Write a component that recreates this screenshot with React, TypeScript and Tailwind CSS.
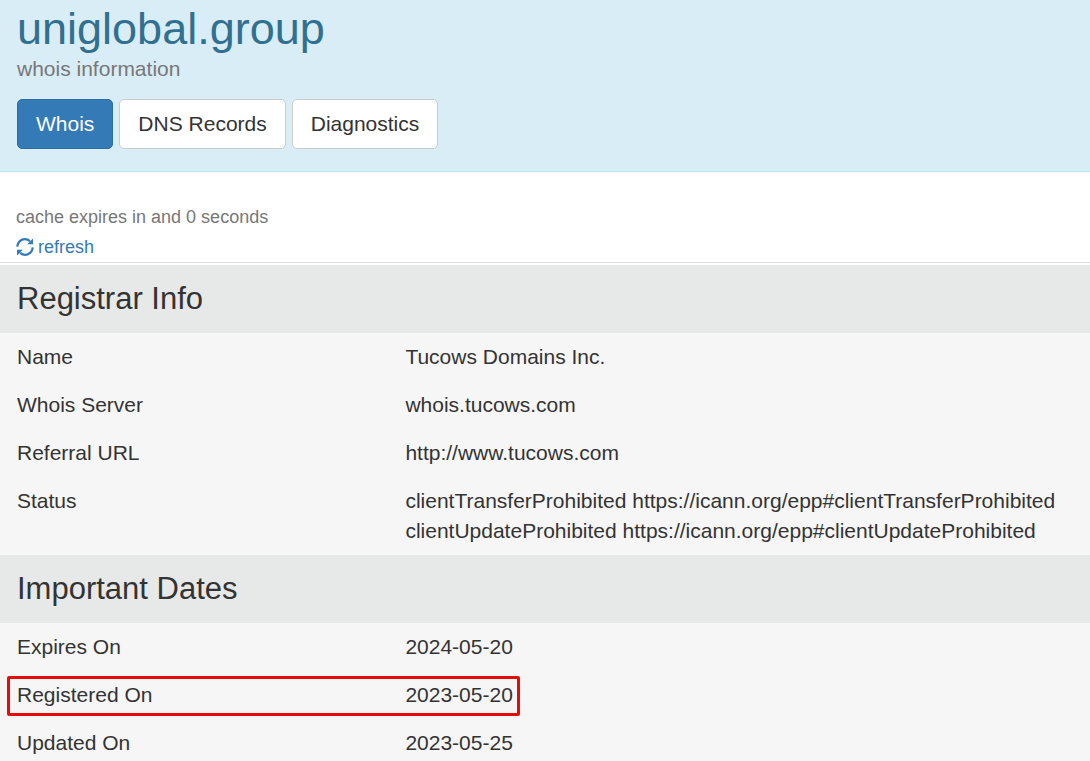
type Row = { label: string; values: string[]; marked?: boolean };

const registrar: Row[] = [
  { label: 'Name', values: ['Tucows Domains Inc.'] },
  { label: 'Whois Server', values: ['whois.tucows.com'] },
  { label: 'Referral URL', values: ['http://www.tucows.com'] },
  {
    label: 'Status',
    values: [
      'clientTransferProhibited https://icann.org/epp#clientTransferProhibited',
      'clientUpdateProhibited https://icann.org/epp#clientUpdateProhibited',
    ],
  },
];

const dates: Row[] = [
  { label: 'Expires On', values: ['2024-05-20'] },
  { label: 'Registered On', values: ['2023-05-20'], marked: true },
  { label: 'Updated On', values: ['2023-05-25'] },
];

export default function App() {
  return (
    <div className="bg-white font-['Liberation_Sans',Arial,sans-serif] text-[21px] leading-[30px] text-[#333]">
      <header className="border-b border-[#bce8f1] bg-[#d9edf7] px-[17px] pb-[22px]">
        <h1 className="text-[45px] leading-[58px] text-[#31708f]">uniglobal.group</h1>
        <p className="leading-[22px] text-[#777]">whois information</p>
        <nav className="mt-[19px] flex gap-[6px]">
          <Tab label="Whois" active />
          <Tab label="DNS Records" />
          <Tab label="Diagnostics" />
        </nav>
      </header>

      <div className="border-b border-[#ddd] px-4 pt-[30px] text-[18px]">
        <p className="text-[#777]">cache expires in and 0 seconds</p>
        <a href="#" className="flex w-fit items-center gap-1 text-[#337ab7]">
          <RefreshIcon />
          refresh
        </a>
      </div>

      <main className="pt-[2px]">
        <Section title="Registrar Info" rows={registrar} />
        <Section title="Important Dates" rows={dates} />
      </main>
    </div>
  );
}

function Tab({ label, active = false }: { label: string; active?: boolean }) {
  return (
    <button
      type="button"
      className={`h-[50px] rounded-[5px] border px-[18px] ${
        active ? 'border-[#2e6da4] bg-[#337ab7] text-white' : 'border-[#ccc] bg-white'
      }`}
    >
      {label}
    </button>
  );
}

function RefreshIcon() {
  return (
    <svg viewBox="0 0 18 18" className="size-[18px]" aria-hidden="true">
      <g fill="none" stroke="currentColor" strokeWidth="2.2">
        <path d="M1.2 8.6C1.5 4.5 4.7 1.2 8.9 1.2c2 0 3.7.7 5 1.9" />
        <path d="M16.8 9.4c-.3 4.1-3.5 7.4-7.7 7.4-2 0-3.700-.7-5-1.9" />
      </g>
      <path d="M17 .5v5.800h-5.800zM1 17.500v-5.800h5.800z" fill="currentColor" />
    </svg>
  );
}

function Section({ title, rows }: { title: string; rows: Row[] }) {
  return (
    <section>
      <h2 className="bg-[#e7e9e8] px-[17px] py-[14px] text-[31px] leading-[40px]">{title}</h2>
      <table className="w-full table-fixed bg-[#f6f6f6] text-left">
        <tbody>
          {rows.map((row) => (
            <tr key={row.label}>
              <th scope="row" className="relative w-[36%] px-[17px] py-[9px] align-top font-normal">
                {row.label}
                {row.marked && (
                  <span className="pointer-events-none absolute top-[5px] left-[7px] h-[40px] w-[513px] rounded-xs border-3 border-[#e60c0c]" />
                )}
              </th>
              <td className="py-[9px] pl-[13px] align-top">
                {row.values.map((value) => (
                  <div key={value} className="whitespace-nowrap">
                    {value}
                  </div>
                ))}
              </td>
            </tr>
          ))}
        </tbody>
      </table>
    </section>
  );
}
